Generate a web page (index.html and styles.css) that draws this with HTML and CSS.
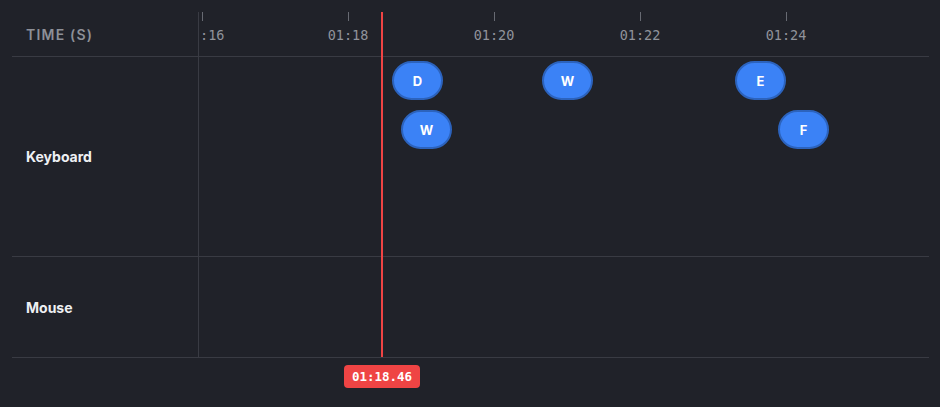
FILE: index.html
```html
<!DOCTYPE html>
<html>
<head>
<meta charset="utf-8">
<link rel="stylesheet" href="styles.css">
</head>
<body>
<div class="timeline">
  <div class="cell head-label">TIME (S)</div>
  <div class="cell ruler">
    <div class="tick" style="left:3px"><span class="clipped">:16</span></div>
    <div class="tick" style="left:149px"><span>01:18</span></div>
    <div class="tick" style="left:295px"><span>01:20</span></div>
    <div class="tick" style="left:441px"><span>01:22</span></div>
    <div class="tick" style="left:587px"><span>01:24</span></div>
  </div>
  <div class="cell row-label row-kb">Keyboard</div>
  <div class="cell track row-kb">
    <div class="key" style="left:193px;top:4px">D</div>
    <div class="key" style="left:343px;top:4px">W</div>
    <div class="key" style="left:536px;top:4px">E</div>
    <div class="key" style="left:202px;top:53px">W</div>
    <div class="key" style="left:579px;top:53px">F</div>
  </div>
  <div class="cell row-label row-mouse">Mouse</div>
  <div class="cell track row-mouse"></div>
  <div class="playhead" style="left:369px"></div>
  <div class="badge" style="left:332px">01:18.46</div>
</div>
</body>
</html>
```
FILE: styles.css
```css
html, body {
  margin: 0;
  padding: 0;
  background: #202229;
  width: 940px;
  height: 407px;
  overflow: hidden;
}
body {
  font-family: "Inter", "Noto Sans", sans-serif;
}
.timeline {
  position: relative;
  margin: 12px 11px 0 12px;
  display: grid;
  grid-template-columns: 186px 1fr;
  grid-template-rows: 45px 200px 101px;
}
.cell {
  border-bottom: 1px solid #393b43;
}
.head-label {
  display: flex;
  align-items: center;
  padding-left: 14px;
  color: #8d9098;
  font-size: 14px;
  font-weight: 600;
  letter-spacing: 1.2px;
}
.ruler, .track {
  position: relative;
  border-left: 1px solid #393b43;
  overflow: hidden;
}
.tick {
  position: absolute;
  top: 0;
  width: 1px;
  height: 9px;
  background: #676a72;
}
.tick span {
  position: absolute;
  top: 15px;
  left: 0;
  transform: translateX(-50%);
  font-family: "DejaVu Sans Mono", "Liberation Mono", monospace;
  font-size: 13.5px;
  color: #90939b;
  white-space: nowrap;
  line-height: 16px;
}
.tick span.clipped {
  left: -2px;
  transform: none;
}
.row-label {
  display: flex;
  align-items: center;
  padding-left: 14px;
  color: #eef0f3;
  font-size: 14px;
  font-weight: 700;
}
.key {
  position: absolute;
  box-sizing: border-box;
  width: 51px;
  height: 39px;
  border-radius: 20px;
  background: #3b82f6;
  border: 2px solid #2c63bd;
  color: #fff;
  font-size: 13px;
  font-weight: 700;
  display: flex;
  align-items: center;
  justify-content: center;
}
.playhead {
  position: absolute;
  top: 0;
  width: 2px;
  height: 345px;
  background: #ef4444;
}
.badge {
  position: absolute;
  top: 353px;
  width: 76px;
  height: 23px;
  box-sizing: border-box;
  border-radius: 4px;
  background: #ef4444;
  color: #fff;
  font-family: "DejaVu Sans Mono", "Liberation Mono", monospace;
  font-size: 12.5px;
  font-weight: 700;
  display: flex;
  align-items: center;
  justify-content: center;
}
```
